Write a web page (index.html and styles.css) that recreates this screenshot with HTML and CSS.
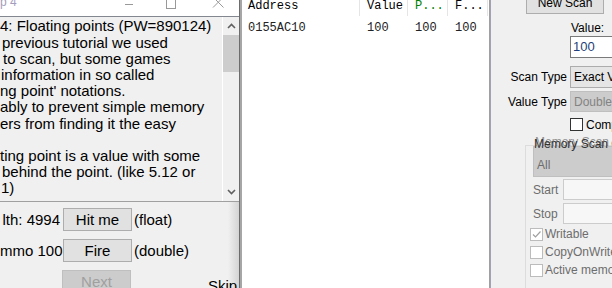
FILE: index.html
```html
<!DOCTYPE html>
<html lang="en">
<head>
    <meta charset="UTF-8">
    <meta name="viewport" content="width=device-width, initial-scale=1.0">
    <title>Cheat Engine Tutorial - Step 4</title>
    <link rel="stylesheet" href="styles.css">
</head>
<body>
    <div class="desktop">
        <div class="tutorial">
            <div class="titlebar">
                <span class="title">p 4</span>
                <svg class="caption-icons" width="119" height="16" viewBox="0 0 119 16">
                    <line x1="5" y1="4.5" x2="13" y2="4.5"/>
                    <rect x="46.5" y="-1.5" width="9" height="10"/>
                    <path d="M93 -3 L103.5 7.5 M103.5 -3 L93 7.5"/>
                </svg>
            </div>

            <div class="memo">
                <div class="memo-text">
                    <div>4: Floating points (PW=890124)</div>
                    <div class="shift-2">previous tutorial we used</div>
                    <div class="shift-3">to scan, but some games</div>
                    <div class="shift-1">information in so called</div>
                    <div>ng point' notations.</div>
                    <div>ably to prevent simple memory</div>
                    <div>ers from finding it the easy</div>
                    <div>&nbsp;</div>
                    <div>ting point is a value with some</div>
                    <div class="shift-2">behind the point. (like 5.12 or</div>
                    <div class="shift-1">1)</div>
                </div>
                <div class="scrollbar">
                    <div class="scroll-arrow">
                        <svg width="9" height="6" viewBox="0 0 9 6"><path d="M1 5 L4.5 1.5 L8 5"/></svg>
                    </div>
                    <div class="scroll-thumb"></div>
                    <div class="scroll-track"></div>
                    <div class="scroll-arrow">
                        <svg width="9" height="6" viewBox="0 0 9 6"><path d="M1 1 L4.5 4.5 L8 1"/></svg>
                    </div>
                </div>
            </div>

            <div class="controls">
                <div class="control-row">
                    <span class="stat">lth: 4994</span>
                    <button class="btn">Hit me</button>
                    <span class="kind">(float)</span>
                </div>
                <div class="control-row">
                    <span class="stat">mmo 100</span>
                    <button class="btn">Fire</button>
                    <span class="kind">(double)</span>
                </div>
                <div class="control-row">
                    <button class="btn btn-next" disabled>Next</button>
                    <span class="skip">Skip</span>
                </div>
            </div>
        </div>

        <div class="cheat-engine">
            <div class="results">
                <div class="results-head">
                    <span class="cell">Address</span>
                    <span class="cell">Value</span>
                    <span class="cell cell-prev">P...</span>
                    <span class="cell">F...</span>
                </div>
                <div class="results-row">
                    <span class="cell">0155AC10</span>
                    <span class="cell">100</span>
                    <span class="cell">100</span>
                    <span class="cell">100</span>
                </div>
            </div>

            <div class="scan-panel">
                <button class="new-scan">New Scan</button>
                <div class="value-label">Value:</div>
                <div class="value-input">100</div>

                <div class="field-row">
                    <span class="field-label">Scan Type</span>
                    <div class="combo">Exact Value</div>
                </div>
                <div class="field-row field-row-tight">
                    <span class="field-label">Value Type</span>
                    <div class="combo combo-disabled">Double</div>
                </div>

                <div class="check-row">
                    <span class="checkbox"></span>
                    <span>Compare to first scan</span>
                </div>

                <div class="group">
                    <span class="group-caption">Memory Scan Options</span>
                    <div class="group-combo">All</div>
                    <div class="range-row">
                        <span class="range-label">Start</span>
                        <span class="range-edit"></span>
                    </div>
                    <div class="range-row range-row-stop">
                        <span class="range-label">Stop</span>
                        <span class="range-edit"></span>
                    </div>
                    <div class="flag-row flag-first">
                        <span class="checkbox checkbox-disabled">
                            <svg width="11" height="11" viewBox="0 0 11 11"><path d="M2 5.5 L4.5 8 L9.5 2.5"/></svg>
                        </span>
                        <span>Writable</span>
                    </div>
                    <div class="flag-row">
                        <span class="checkbox checkbox-disabled"></span>
                        <span>CopyOnWrite</span>
                    </div>
                    <div class="flag-row">
                        <span class="checkbox checkbox-disabled"></span>
                        <span>Active memory only</span>
                    </div>
                </div>
            </div>
        </div>
    </div>
</body>
</html>
```

FILE: styles.css
```css
* {
    box-sizing: border-box;
}

body {
    margin: 0;
    width: 612px;
    height: 288px;
    overflow: hidden;
    background-color: #f0f0f0;
    font-family: 'Liberation Sans', Arial, sans-serif;
    color: #000;
}

.desktop {
    display: flex;
    height: 288px;
}

/* tutorial window */

.tutorial {
    width: 240px;
    flex: none;
    display: flex;
    flex-direction: column;
    border-right: 1px solid #6d6d6d;
    background-color: #f0f0f0;
}

.titlebar {
    height: 16px;
    flex: none;
    display: flex;
    background-color: #fff;
    overflow: hidden;
}

.title {
    font-size: 12px;
    line-height: 12px;
    margin-top: -4px;
    color: #a39cbd;
    white-space: nowrap;
}

.caption-icons {
    margin-left: auto;
    fill: none;
    stroke: #999;
    stroke-width: 1;
}

.memo {
    height: 186px;
    flex: none;
    display: flex;
    border-top: 1px solid #828790;
    border-bottom: 1px solid #a0a0a0;
}

.memo-text {
    width: 222px;
    overflow: hidden;
    padding-top: 1.4px;
    font-size: 15px;
    line-height: 16.2px;
    white-space: nowrap;
}

.memo-text div {
    height: 16.2px;
}

.memo-text .shift-1 {
    padding-left: 1px;
}

.memo-text .shift-2 {
    padding-left: 2px;
}

.memo-text .shift-3 {
    padding-left: 3px;
}

.scrollbar {
    width: 17px;
    display: flex;
    flex-direction: column;
    border-left: 1px solid #fff;
}

.scroll-arrow {
    height: 18px;
    display: flex;
    align-items: center;
    justify-content: center;
}

.scroll-arrow svg {
    fill: none;
    stroke: #606060;
    stroke-width: 1.6;
}

.scroll-thumb {
    height: 37px;
    background-color: #cdcdcd;
}

.scroll-track {
    flex: 1;
}

.controls {
    flex: 1;
    display: flex;
    flex-direction: column;
    gap: 8px;
    padding-top: 6px;
    font-size: 15px;
    background: linear-gradient(to right, #f0f0f0 228px, #d4d4d4 239px);
}

.control-row {
    display: flex;
    align-items: center;
    height: 23px;
    white-space: nowrap;
}

.stat {
    width: 60px;
    flex: none;
    text-align: right;
    margin-right: 3px;
}

.btn {
    width: 69px;
    height: 23px;
    flex: none;
    padding: 0;
    font-family: inherit;
    font-size: 15px;
    color: #000;
    background-color: #e1e1e1;
    border: 1px solid #adadad;
}

.btn-next {
    margin-left: 62px;
    color: #a0a0a0;
    background-color: #cccccc;
    border-color: #bfbfbf;
}

.kind {
    margin-left: 2px;
}

.skip {
    align-self: flex-start;
    margin: 7px 0 0 77px;
}

/* cheat engine main window */

.cheat-engine {
    flex: 1;
    display: flex;
}

.results {
    width: 250px;
    flex: none;
    background-color: #fff;
    border-left: 2px solid #a6a6a6;
    border-right: 1px solid #a0a0a0;
    font-family: 'Liberation Mono', 'Courier New', monospace;
    font-size: 12px;
}

.results-head,
.results-row {
    display: grid;
    grid-template-columns: 118px 48px 40px 40px;
    white-space: nowrap;
}

.results-head {
    height: 16px;
    line-height: 13px;
}

.results-head .cell {
    border-right: 1px solid #e5e5e5;
}

.results-row {
    margin-top: 3px;
    line-height: 18px;
    color: #222;
}

.cell {
    padding-left: 7px;
}

.cell:first-child {
    padding-left: 6px;
}

.cell-prev {
    color: #008000;
}

.scan-panel {
    flex: 1;
    display: flex;
    flex-direction: column;
    align-items: flex-start;
    overflow: hidden;
    border-left: 1px solid #a3a1b3;
    font-size: 12px;
    white-space: nowrap;
}

.new-scan {
    width: 78px;
    height: 22px;
    margin: -8px 0 0 35px;
    padding: 0;
    font-family: inherit;
    font-size: 12px;
    color: #000;
    background-color: #e1e1e1;
    border: 1px solid #adadad;
}

.value-label {
    margin: 7px 0 0 80px;
    line-height: 14px;
}

.value-input {
    width: 60px;
    height: 22px;
    margin: 1px 0 0 79px;
    padding-left: 2px;
    line-height: 20px;
    font-size: 13px;
    color: #1f3f7a;
    background-color: #fff;
    border: 1px solid #7a7a7a;
}

.field-row {
    display: flex;
    align-items: center;
    height: 22px;
    margin-top: 8px;
}

.field-row-tight {
    height: 21px;
    margin-top: 3px;
}

.field-label {
    width: 76px;
    text-align: right;
}

.combo {
    width: 60px;
    height: 100%;
    margin-left: 3px;
    padding-left: 3px;
    display: flex;
    align-items: center;
    overflow: hidden;
    background-color: #e5e5e5;
    border: 1px solid #acacac;
}

.combo-disabled {
    color: #838383;
    background-color: #cccccc;
    border-color: #bfbfbf;
}

.check-row {
    display: flex;
    align-items: center;
    gap: 3px;
    height: 13px;
    margin: 6px 0 0 79px;
}

.checkbox {
    width: 13px;
    height: 13px;
    flex: none;
    display: flex;
    align-items: center;
    justify-content: center;
    background-color: #fff;
    border: 1px solid #333;
}

.checkbox-disabled {
    border-color: #bcbcbc;
}

.checkbox svg {
    fill: none;
    stroke: #a0a0a0;
    stroke-width: 1.2;
}

.group {
    position: relative;
    flex: 1;
    width: 120px;
    margin: 14px 0 0 34px;
    padding-left: 4px;
    border-top: 1px solid #dcdcdc;
    border-left: 1px solid #dcdcdc;
    color: #6d6d6d;
}

/* the caption is painted twice by the app, slightly offset */
.group-caption {
    position: absolute;
    top: -9px;
    left: 8px;
    line-height: 14px;
    color: #333;
    text-shadow: 1px -2px 0 rgba(60, 60, 60, 0.55);
    z-index: 1;
}

.group-combo {
    width: 90px;
    height: 31px;
    margin-left: 3px;
    padding: 11px 3px 0;
    line-height: 14px;
    background-color: #cccccc;
    border: 1px solid #bfbfbf;
}

.range-row {
    display: flex;
    align-items: center;
    height: 21px;
    margin: 2px 0 0 3px;
}

.range-row-stop {
    margin-top: 3px;
}

.range-label {
    width: 30px;
}

.range-edit {
    width: 60px;
    height: 21px;
    background-color: #f7f7f7;
    border: 1px solid #cccccc;
}

.flag-row {
    display: flex;
    align-items: center;
    gap: 2px;
    height: 18px;
}

.flag-first {
    margin-top: 1px;
}
```
